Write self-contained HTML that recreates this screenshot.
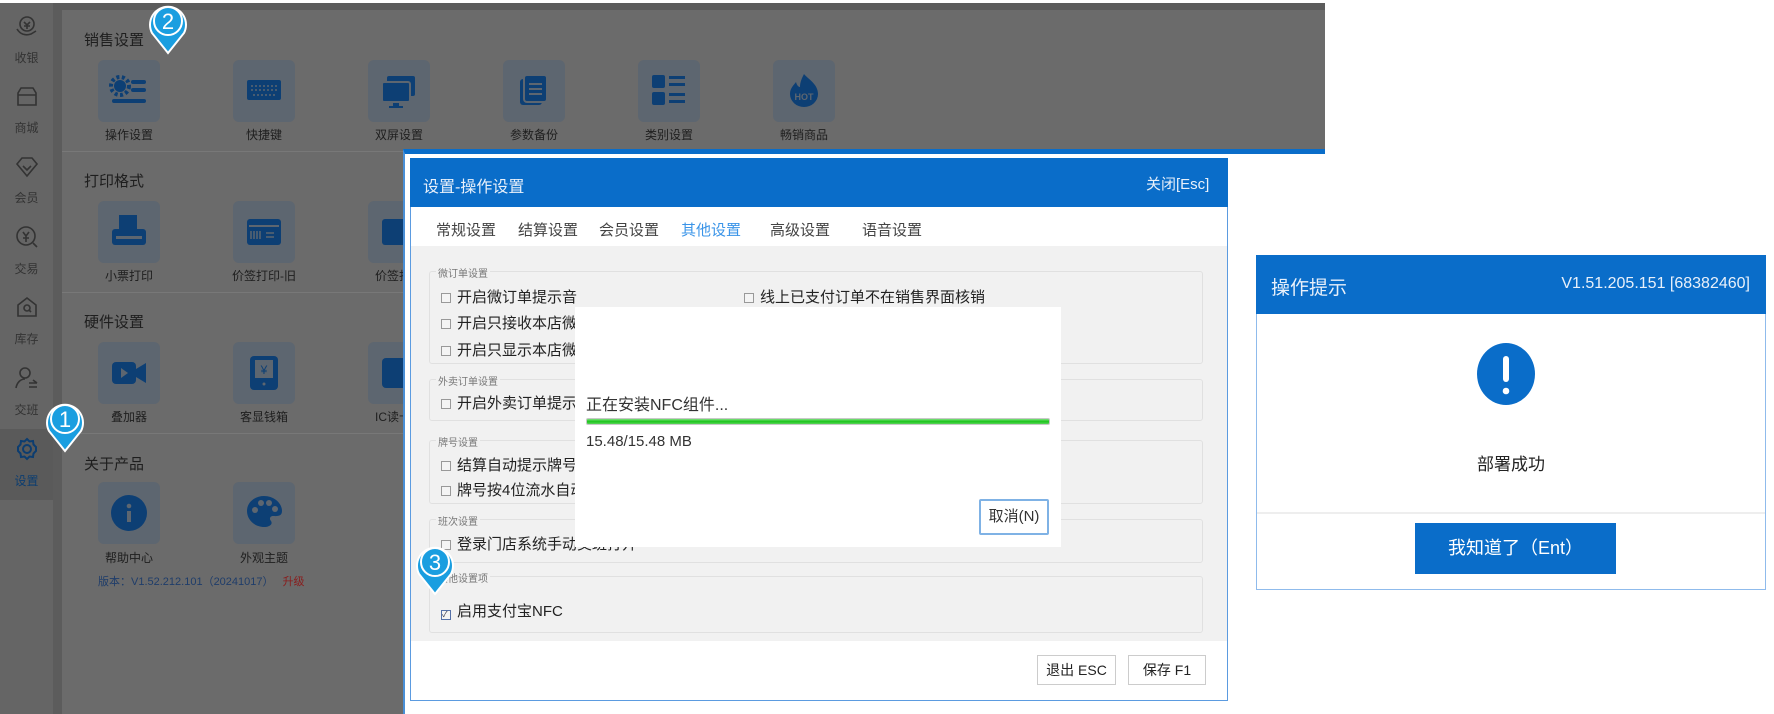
<!DOCTYPE html>
<html><head><meta charset="utf-8">
<style>
*{margin:0;padding:0;box-sizing:border-box}
body{width:1774px;height:714px;background:#fff;position:relative;overflow:hidden;font-family:"Liberation Sans","Noto Sans CJK SC",sans-serif;}
.a{position:absolute}
.side{left:0;top:3px;width:53px;height:711px;background:#656565}
.gap{left:53px;top:3px;width:9px;height:711px;background:#5c5c5c}
.main{left:62px;top:10px;width:1263px;height:704px;background:#6b6b6b}
.topbar{left:53px;top:3px;width:1272px;height:7px;background:#5c5c5c}
.si{position:absolute;left:0;width:53px;text-align:center;font-size:12px;color:#333}
.sic{position:absolute;left:15px;width:24px;height:24px}
.st{font-size:15px;color:#1e1e1e}
.tile{position:absolute;width:62px;height:62px;background:#5d6670;border-radius:6px}
.tl{position:absolute;width:120px;text-align:center;font-size:12px;color:#1e1e1e}
.sep{position:absolute;left:62px;width:1263px;height:1px;background:#787878}
.cb{display:inline-block;width:10px;height:10px;border:1px solid #999;background:#f4f4f4;margin-right:6px;vertical-align:-1px}
.row{position:absolute;font-size:15px;color:#222;white-space:nowrap}
.grp{position:absolute;left:429px;width:774px;border:1px solid #e0e0e0;border-radius:3px}
.gl{position:absolute;font-size:10px;color:#777;background:#f1f1f1;padding:0 2px}
.btn{position:absolute;border:1px solid #ccc;background:#fff;font-size:14px;color:#222;text-align:center}
</style></head><body>
<div class="a side"></div><div class="a gap"></div><div class="a topbar"></div><div class="a main"></div>
<div class="a" style="left:0;top:429px;width:53px;height:71px;background:#5a5a5a"></div>

<!-- sidebar -->
<svg class="a" style="left:14px;top:14px" width="26" height="26" viewBox="0 0 26 26" fill="none" stroke="#333" stroke-width="1.6"><circle cx="13" cy="10" r="7"/><path d="M3 15c3 5 8 7 14 5l5-3"/><path d="M10 8l3 3 3-3M13 11v4M10 12h6"/></svg>
<div class="si" style="top:49px">收银</div>
<svg class="a" style="left:14px;top:84px" width="26" height="26" viewBox="0 0 26 26" fill="none" stroke="#333" stroke-width="1.6"><path d="M4 9l3-5h12l3 5v12H4z M4 11h18"/></svg>
<div class="si" style="top:119px">商城</div>
<svg class="a" style="left:14px;top:154px" width="26" height="26" viewBox="0 0 26 26" fill="none" stroke="#333" stroke-width="1.6"><path d="M3 10l5-6h10l5 6-10 12z M9 12l4 4 4-4"/></svg>
<div class="si" style="top:189px">会员</div>
<svg class="a" style="left:14px;top:224px" width="26" height="26" viewBox="0 0 26 26" fill="none" stroke="#333" stroke-width="1.6"><circle cx="12" cy="12" r="9"/><path d="M9 8l3 4 3-4M12 12v6M9 14h6M19 19l4 4"/></svg>
<div class="si" style="top:260px">交易</div>
<svg class="a" style="left:14px;top:294px" width="26" height="26" viewBox="0 0 26 26" fill="none" stroke="#333" stroke-width="1.6"><path d="M4 11l9-7 9 7v11H4z"/><circle cx="13" cy="14" r="3"/><path d="M15 16l2 2"/></svg>
<div class="si" style="top:330px">库存</div>
<svg class="a" style="left:14px;top:365px" width="26" height="26" viewBox="0 0 26 26" fill="none" stroke="#333" stroke-width="1.6"><circle cx="11" cy="8" r="5"/><path d="M2 23c1-6 5-9 9-9M15 18h8M19 15l4 3M15 22h8"/></svg>
<div class="si" style="top:401px">交班</div>
<svg class="a" style="left:14px;top:436px" width="26" height="26" viewBox="0 0 26 26" fill="none" stroke="#0c3d70" stroke-width="2"><circle cx="13" cy="13" r="4"/><path d="M13 3l2.5 2.5 3.5-.5 .5 3.5L22 11v4l-2.5 2.5-.5 3.5-3.5-.5L13 23l-2.5-2.5-3.5.5-.5-3.5L4 15v-4l2.5-2.5.5-3.5 3.5.5z"/></svg>
<div class="si" style="top:472px;color:#0c3d70">设置</div>

<!-- sections -->
<div class="a st" style="left:84px;top:29px">销售设置</div>
<div class="sep" style="top:151px"></div>
<div class="a st" style="left:84px;top:170px">打印格式</div>
<div class="sep" style="top:292px"></div>
<div class="a st" style="left:84px;top:311px">硬件设置</div>
<div class="sep" style="top:433px"></div>
<div class="a st" style="left:84px;top:453px">关于产品</div>

<div class="tile" style="left:98px;top:60px"><svg width="62" height="62" viewBox="0 0 62 62" fill="#0d3f74"><circle cx="22" cy="26" r="6"/><circle cx="22" cy="26" r="9" fill="none" stroke="#0d3f74" stroke-width="4" stroke-dasharray="3 2.5"/><rect x="33" y="20" width="15" height="4" rx="2"/><rect x="33" y="28" width="15" height="4" rx="2"/><rect x="14" y="39" width="34" height="4" rx="2"/></svg></div>
<div class="tl" style="left:69px;top:126px">操作设置</div>
<div class="tile" style="left:233px;top:60px"><svg width="62" height="62" viewBox="0 0 62 62"><rect x="14" y="20" width="34" height="20" rx="2" fill="#0d3f74"/><path d="M18 26h26M18 30h26M20 35h22" stroke="#5d6670" stroke-width="1.5" stroke-dasharray="2 2"/></svg></div>
<div class="tl" style="left:204px;top:126px">快捷键</div>
<div class="tile" style="left:368px;top:60px"><svg width="62" height="62" viewBox="0 0 62 62" fill="#0d3f74"><rect x="19" y="16" width="28" height="20" rx="2"/><rect x="14" y="22" width="28" height="20" rx="2" stroke="#5d6670" stroke-width="2"/><rect x="25" y="43" width="6" height="3"/><rect x="21" y="46" width="14" height="2"/></svg></div>
<div class="tl" style="left:339px;top:126px">双屏设置</div>
<div class="tile" style="left:503px;top:60px"><svg width="62" height="62" viewBox="0 0 62 62" fill="#0d3f74"><rect x="17" y="19" width="22" height="26" rx="3"/><rect x="21" y="15" width="23" height="27" rx="3" stroke="#5d6670" stroke-width="2"/><path d="M26 24h13M26 29h13M26 34h13" stroke="#5d6670" stroke-width="2"/></svg></div>
<div class="tl" style="left:474px;top:126px">参数备份</div>
<div class="tile" style="left:638px;top:60px"><svg width="62" height="62" viewBox="0 0 62 62" fill="#0d3f74"><rect x="14" y="15" width="13" height="13" rx="2"/><rect x="14" y="32" width="13" height="13" rx="2"/><rect x="31" y="16" width="16" height="3"/><rect x="31" y="23" width="16" height="3"/><rect x="31" y="33" width="16" height="3"/><rect x="31" y="40" width="16" height="3"/></svg></div>
<div class="tl" style="left:609px;top:126px">类别设置</div>
<div class="tile" style="left:773px;top:60px"><svg width="62" height="62" viewBox="0 0 62 62"><path d="M31 14c4 5 14 10 14 20a14 13 0 0 1-28 0c0-6 4-9 6-12 1 4 3 5 4 5 0-5 2-9 4-13z" fill="#0d3f74"/><text x="31" y="40" font-size="9" font-weight="bold" fill="#5d6670" text-anchor="middle" font-family="Liberation Sans">HOT</text></svg></div>
<div class="tl" style="left:744px;top:126px">畅销商品</div>

<div class="tile" style="left:98px;top:201px"><svg width="62" height="62" viewBox="0 0 62 62" fill="#0d3f74"><rect x="21" y="14" width="18" height="14"/><rect x="14" y="28" width="34" height="16" rx="3"/><rect x="18" y="35" width="26" height="3" fill="#5d6670"/></svg></div>
<div class="tl" style="left:69px;top:267px">小票打印</div>
<div class="tile" style="left:233px;top:201px"><svg width="62" height="62" viewBox="0 0 62 62"><rect x="14" y="18" width="34" height="26" rx="3" fill="#0d3f74"/><rect x="16" y="24" width="30" height="2" fill="#5d6670"/><path d="M18 30v8M21 30v8M24 30v8M27 30v8M33 32h8M33 36h8" stroke="#5d6670" stroke-width="1.5"/></svg></div>
<div class="tl" style="left:204px;top:267px">价签打印-旧</div>
<div class="tile" style="left:368px;top:201px"><svg width="62" height="62" viewBox="0 0 62 62"><rect x="14" y="18" width="34" height="26" rx="3" fill="#0d3f74"/></svg></div>
<div class="tl" style="left:339px;top:267px">价签打印</div>

<div class="tile" style="left:98px;top:342px"><svg width="62" height="62" viewBox="0 0 62 62" fill="#0d3f74"><rect x="14" y="20" width="24" height="22" rx="4"/><path d="M38 27l10-6v20l-10-6z"/><path d="M23 26l7 5-7 5z" fill="#5d6670"/></svg></div>
<div class="tl" style="left:69px;top:408px">叠加器</div>
<div class="tile" style="left:233px;top:342px"><svg width="62" height="62" viewBox="0 0 62 62"><rect x="17" y="14" width="28" height="34" rx="4" fill="#0d3f74"/><rect x="22" y="18" width="18" height="18" fill="#5d6670"/><text x="31" y="32" font-size="12" fill="#0d3f74" text-anchor="middle">¥</text><circle cx="31" cy="42" r="1.5" fill="#5d6670"/></svg></div>
<div class="tl" style="left:204px;top:408px">客显钱箱</div>
<div class="tile" style="left:368px;top:342px"><svg width="62" height="62" viewBox="0 0 62 62"><rect x="14" y="16" width="34" height="30" rx="4" fill="#0d3f74"/></svg></div>
<div class="tl" style="left:339px;top:408px">IC读卡器</div>

<div class="tile" style="left:98px;top:482px"><svg width="62" height="62" viewBox="0 0 62 62"><circle cx="31" cy="31" r="18" fill="#0d3f74"/><rect x="29" y="29" width="4" height="11" fill="#5d6670"/><circle cx="31" cy="24" r="2.3" fill="#5d6670"/></svg></div>
<div class="tl" style="left:69px;top:549px">帮助中心</div>
<div class="tile" style="left:233px;top:482px"><svg width="62" height="62" viewBox="0 0 62 62"><path d="M31 14c10 0 18 7 18 15 0 6-6 5-9 5-3 0-4 3-2 5 2 3-1 6-7 6-9 0-17-7-17-16s8-15 17-15z" fill="#0d3f74"/><circle cx="22" cy="28" r="3" fill="#5d6670"/><circle cx="28" cy="21" r="3" fill="#5d6670"/><circle cx="36" cy="21" r="3" fill="#5d6670"/><circle cx="42" cy="27" r="3" fill="#5d6670"/></svg></div>
<div class="tl" style="left:204px;top:549px">外观主题</div>
<div class="a" style="left:98px;top:573px;font-size:11px;color:#1f3d6a">版本：V1.52.212.101（20241017） <span style="color:#8a1c1c;margin-left:6px">升级</span></div>

<!-- outer frame -->
<div class="a" style="left:403px;top:149px;width:922px;height:565px;background:#fff;border-top:5px solid #0a6dc9;border-left:2px solid #4a8fd6"></div>
<!-- inner dialog -->
<div class="a" style="left:410px;top:158px;width:818px;height:543px;border:1px solid #5b9be0;background:#fff"></div>
<div class="a" style="left:410px;top:158px;width:818px;height:49px;background:#0a6dc9"></div>
<div class="a" style="left:423px;top:173px;font-size:16px;color:#e8f0fa">设置-操作设置</div>
<div class="a" style="left:1146px;top:173px;font-size:15px;color:#e8f0fa">关闭[Esc]</div>
<div class="a" style="top:219px;left:436px;font-size:15px;color:#444">常规设置</div>
<div class="a" style="top:219px;left:518px;font-size:15px;color:#444">结算设置</div>
<div class="a" style="top:219px;left:599px;font-size:15px;color:#444">会员设置</div>
<div class="a" style="top:219px;left:681px;font-size:15px;color:#3a94e8">其他设置</div>
<div class="a" style="top:219px;left:770px;font-size:15px;color:#444">高级设置</div>
<div class="a" style="top:219px;left:862px;font-size:15px;color:#444">语音设置</div>
<div class="a" style="left:411px;top:246px;width:816px;height:395px;background:#f1f1f1"></div>

<div class="grp" style="top:271px;height:93px"></div><div class="gl" style="left:436px;top:265px">微订单设置</div>
<div class="row" style="left:441px;top:286px"><span class="cb"></span>开启微订单提示音</div>
<div class="row" style="left:744px;top:286px"><span class="cb"></span>线上已支付订单不在销售界面核销</div>
<div class="row" style="left:441px;top:312px"><span class="cb"></span>开启只接收本店微订单</div>
<div class="row" style="left:441px;top:339px"><span class="cb"></span>开启只显示本店微订单</div>
<div class="grp" style="top:379px;height:42px"></div><div class="gl" style="left:436px;top:373px">外卖订单设置</div>
<div class="row" style="left:441px;top:392px"><span class="cb"></span>开启外卖订单提示音</div>
<div class="grp" style="top:440px;height:64px"></div><div class="gl" style="left:436px;top:434px">牌号设置</div>
<div class="row" style="left:441px;top:454px"><span class="cb"></span>结算自动提示牌号</div>
<div class="row" style="left:441px;top:479px"><span class="cb"></span>牌号按4位流水自动</div>
<div class="grp" style="top:519px;height:44px"></div><div class="gl" style="left:436px;top:513px">班次设置</div>
<div class="row" style="left:441px;top:533px"><span class="cb"></span>登录门店系统手动交班打开</div>
<div class="grp" style="top:576px;height:57px"></div><div class="gl" style="left:436px;top:570px">其他设置项</div>
<div class="row" style="left:441px;top:600px"><span class="cb" style="border-color:#5470a8;font-size:8px;line-height:8px;color:#334">✓</span>启用支付宝NFC</div>

<div class="btn" style="left:1037px;top:655px;width:79px;height:30px;line-height:28px">退出 ESC</div>
<div class="btn" style="left:1128px;top:655px;width:78px;height:30px;line-height:28px">保存 F1</div>

<!-- progress popup -->
<div class="a" style="left:575px;top:307px;width:486px;height:240px;background:#fff"></div>
<div class="a" style="left:586px;top:391px;font-size:16px;color:#333">正在安装NFC组件...</div>
<div class="a" style="left:586px;top:418px;width:464px;height:7px;background:linear-gradient(#7ee07e,#1bc51b 50%,#5ad45a);border:1px solid #c8c8c8;border-radius:2px"></div>
<div class="a" style="left:586px;top:433px;font-size:15px;color:#333">15.48/15.48 MB</div>
<div class="a" style="left:979px;top:499px;width:70px;height:36px;border:2px solid #7fb2e5;border-radius:2px;font-size:15px;line-height:32px;text-align:center;color:#333">取消(N)</div>

<!-- right dialog -->
<div class="a" style="left:1256px;top:255px;width:510px;height:335px;border:1px solid #8fbbec;background:#fff"></div>
<div class="a" style="left:1256px;top:255px;width:510px;height:59px;background:#0a6dc9"></div>
<div class="a" style="left:1271px;top:273px;font-size:19px;color:#e8f0fa">操作提示</div>
<div class="a" style="right:24px;top:275px;font-size:16px;color:#e8f0fa">V1.51.205.151 [68382460]</div>
<svg class="a" style="left:1476px;top:342px" width="60" height="64" viewBox="0 0 60 64"><ellipse cx="30" cy="32" rx="29" ry="31" fill="#0a6dc9"/><rect x="27" y="14" width="6" height="26" rx="3" fill="#fff"/><circle cx="30" cy="49" r="3.3" fill="#fff"/></svg>
<div class="a" style="left:1256px;top:450px;width:510px;text-align:center;font-size:17px;color:#222">部署成功</div>
<div class="a" style="left:1257px;top:512px;width:508px;height:2px;background:#eee"></div>
<div class="a" style="left:1415px;top:523px;width:201px;height:51px;background:#0a6dc9;color:#fff;font-size:18px;line-height:51px;text-align:center">我知道了（Ent）</div>

<!-- pins -->
<svg class="a" style="left:43px;top:399px" width="44" height="54" viewBox="0 0 44 54"><path d="M22 52L6 32A18 18 0 1 1 38 32z" fill="#1a9ee0" stroke="#fff" stroke-width="2"/><circle cx="22" cy="20" r="14" fill="none" stroke="#fff" stroke-width="2"/><text x="22" y="28" font-size="22" fill="#fff" text-anchor="middle" font-family="Liberation Sans">1</text></svg>
<svg class="a" style="left:146px;top:1px" width="44" height="54" viewBox="0 0 44 54"><path d="M22 52L6 32A18 18 0 1 1 38 32z" fill="#1a9ee0" stroke="#fff" stroke-width="2"/><circle cx="22" cy="20" r="14" fill="none" stroke="#fff" stroke-width="2"/><text x="22" y="28" font-size="22" fill="#fff" text-anchor="middle" font-family="Liberation Sans">2</text></svg>
<svg class="a" style="left:413px;top:542px" width="44" height="54" viewBox="0 0 44 54"><path d="M22 52L6 32A18 18 0 1 1 38 32z" fill="#1a9ee0" stroke="#fff" stroke-width="2"/><circle cx="22" cy="20" r="14" fill="none" stroke="#fff" stroke-width="2"/><text x="22" y="28" font-size="22" fill="#fff" text-anchor="middle" font-family="Liberation Sans">3</text></svg>
</body></html>
